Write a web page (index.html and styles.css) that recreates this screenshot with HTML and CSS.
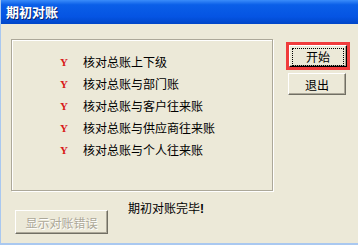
FILE: index.html
```html
<!DOCTYPE html>
<html lang="zh">
<head>
    <meta charset="utf-8">
    <title>期初对账</title>
    <link rel="stylesheet" href="styles.css">
</head>
<body>
    <div class="fereastra">
        <div class="titlu">期初对账</div>
        <div class="continut">
            <div class="grup">
                <div class="rand"><span class="semn">Y</span><span>核对总账上下级</span></div>
                <div class="rand"><span class="semn">Y</span><span>核对总账与部门账</span></div>
                <div class="rand"><span class="semn">Y</span><span>核对总账与客户往来账</span></div>
                <div class="rand"><span class="semn">Y</span><span>核对总账与供应商往来账</span></div>
                <div class="rand"><span class="semn">Y</span><span>核对总账与个人往来账</span></div>
            </div>
            <div class="butoane">
                <div class="selectat"><button class="buton principal"><span class="focus">开始</span></button></div>
                <button class="buton iesire">退出</button>
            </div>
        </div>
        <div class="jos">
            <button class="buton dezactivat" disabled>显示对账错误</button>
            <div class="mesaj">期初对账完毕<b>!</b></div>
        </div>
    </div>
</body>
</html>
```

FILE: styles.css
```css
body {
    margin: 0;
    font-family: "Noto Sans CJK SC", "Liberation Sans", sans-serif;
    font-size: 12px;
}

.fereastra {
    width: 358px;
    height: 245px;
    background-color: #ECE9D8;
    border-left: 1px solid #A9C8F0;
    border-bottom: 2px solid #A9C8F0;
    box-sizing: border-box;
}

.titlu {
    height: 24px;
    line-height: 24px;
    padding-left: 5px;
    color: white;
    font-size: 13px;
    font-weight: bold;
    text-shadow: 1px 1px #0A246A;
    background: linear-gradient(#3A8CFA 0%, #0A5FE8 20%, #0554E3 70%, #0046C8 100%);
}

.continut {
    display: flex;
    padding: 15px 0 0 10px;
}

.grup {
    width: 262px;
    height: 152px;
    border: 1px solid #ACA899;
    box-shadow: inset 1px 1px #fff, 1px 1px #fff;
    padding-top: 11px;
    box-sizing: border-box;
}

.rand {
    display: flex;
    align-items: center;
    height: 22px;
    line-height: 22px;
}

.semn {
    width: 23px;
    margin-left: 48px;
    color: #D81818;
    font-family: "Liberation Serif", serif;
    font-weight: bold;
    font-size: 11px;
}

.butoane {
    display: flex;
    flex-direction: column;
    margin-left: 13px;
    padding-top: 3px;
}

.selectat {
    border: 3px solid #F03C3C;
    width: 58px;
}

.buton {
    display: block;
    width: 58px;
    height: 22px;
    padding: 0;
    background-color: #ECE9D8;
    border: 1px solid;
    border-color: #fff #716F64 #716F64 #fff;
    box-shadow: inset -1px -1px #ACA899;
    font-family: "Noto Sans CJK SC", sans-serif;
    font-size: 12px;
    color: black;
}

.principal {
    border-color: #fff #000 #000 #fff;
    padding: 2px;
}

.focus {
    display: block;
    height: 16px;
    line-height: 15px;
    border: 1px dotted #000;
}

.iesire {
    margin-top: 3px;
    margin-left: 2px;
}

.jos {
    display: flex;
    padding-left: 14px;
}

.dezactivat {
    width: 93px;
    height: 24px;
    margin-top: 19px;
    color: #ACA899;
    text-shadow: 1px 1px #fff;
}

.mesaj {
    margin-left: 20px;
    margin-top: 8px;
    color: black;
}

.mesaj b {
    font-family: "Liberation Sans", sans-serif;
}
```
